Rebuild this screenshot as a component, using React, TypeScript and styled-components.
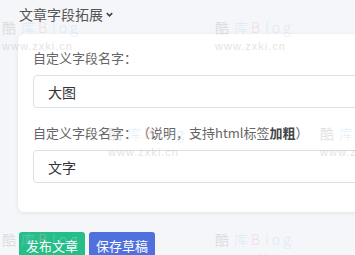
import React from "react";
import styled, { createGlobalStyle } from "styled-components";

const GlobalStyle = createGlobalStyle`
  html, body {
    margin: 0;
    padding: 0;
    background: #f5f6f9;
    overflow: hidden;
  }
  body {
    font-family: "Noto Sans CJK SC", "Noto Sans", sans-serif;
    text-spacing-trim: space-all;
  }
`;

const marks = [
  { x: 2, y: 19 },
  { x: 215, y: 19 },
  { x: 108, y: 125 },
  { x: 320, y: 125 },
  { x: 2, y: 231 },
  { x: 215, y: 231 },
];

export default function App() {
  return (
    <>
      <GlobalStyle />
      <Page>
        <Title>
          文章字段拓展
          <svg width="9" height="9" viewBox="0 0 10 10">
            <path d="M2 3.5 L5 6.5 L8 3.5" fill="none" stroke="#444" strokeWidth="1.8" />
          </svg>
        </Title>

        <Card>
          <Field>
            <Label>自定义字段名字：</Label>
            <Input defaultValue="大图" />
          </Field>
          <Field>
            <Label>
              自定义字段名字：（说明，支持html标签<b>加粗</b>）
            </Label>
            <Input defaultValue="文字" />
          </Field>
        </Card>

        <Actions>
          <Button $tone="#25bd88">发布文章</Button>
          <Button $tone="#5071dd">保存草稿</Button>
        </Actions>

        {marks.map((m, i) => (
          <Mark key={i} style={{ left: m.x, top: m.y }}>
            <MarkName>
              <span>酷</span>
              <Blue>库</Blue>
              <Pink>B</Pink>
              <Blue>log</Blue>
            </MarkName>
            <MarkUrl>www.zxki.cn</MarkUrl>
          </Mark>
        ))}
      </Page>
    </>
  );
}

const Page = styled.div`
  position: relative;
  width: 355px;
  height: 255px;
  padding: 4px 0 0 19px;
  box-sizing: border-box;
`;

const Title = styled.div`
  display: flex;
  align-items: center;
  gap: 2px;
  height: 20px;
  font-size: 14px;
  color: #555;
`;

const Card = styled.div`
  width: 400px;
  margin: 10px 0 0 -1px;
  padding: 14px 15px 29px;
  box-sizing: border-box;
  background: #fff;
  border-radius: 6px;
  box-shadow: 0 1px 4px rgba(0, 0, 0, 0.08);
  display: flex;
  flex-direction: column;
  gap: 15px;
`;

const Field = styled.div`
  display: flex;
  flex-direction: column;
  gap: 7px;
`;

const Label = styled.label`
  font-size: 13px;
  line-height: 20px;
  color: #666;
  white-space: nowrap;

  b {
    color: #444;
  }
`;

const Input = styled.input`
  height: 33px;
  box-sizing: border-box;
  border: 1px solid #dcdfe6;
  border-radius: 4px;
  padding: 0 14px;
  font-family: "Noto Sans CJK SC", "Noto Sans", sans-serif;
  font-size: 14px;
  color: #333;
  background: #fff;
  outline: none;
`;

const Actions = styled.div`
  display: flex;
  gap: 4px;
  margin-top: 20px;
`;

const Button = styled.button<{ $tone: string }>`
  height: 26px;
  padding: 0 7px;
  border: none;
  border-radius: 3px;
  background: ${(p) => p.$tone};
  color: #fff;
  font-family: "Noto Sans CJK SC", "Noto Sans", sans-serif;
  font-size: 13px;
  cursor: pointer;
`;

const Mark = styled.div`
  position: absolute;
  pointer-events: none;
  opacity: 0.4;
`;

const MarkName = styled.div`
  font-size: 14px;
  line-height: 16px;
  letter-spacing: 5px;
  color: #bbb;
  white-space: nowrap;
`;

const Blue = styled.span`
  color: #b9d9f2;
  letter-spacing: 3px;
  font-weight: 300;
`;

const Pink = styled.span`
  color: #f3b9bd;
  font-weight: 300;
`;

const MarkUrl = styled.div`
  margin-top: 5px;
  font-family: "Liberation Sans", sans-serif;
  font-size: 11px;
  letter-spacing: 1px;
  color: #bbb;
`;
